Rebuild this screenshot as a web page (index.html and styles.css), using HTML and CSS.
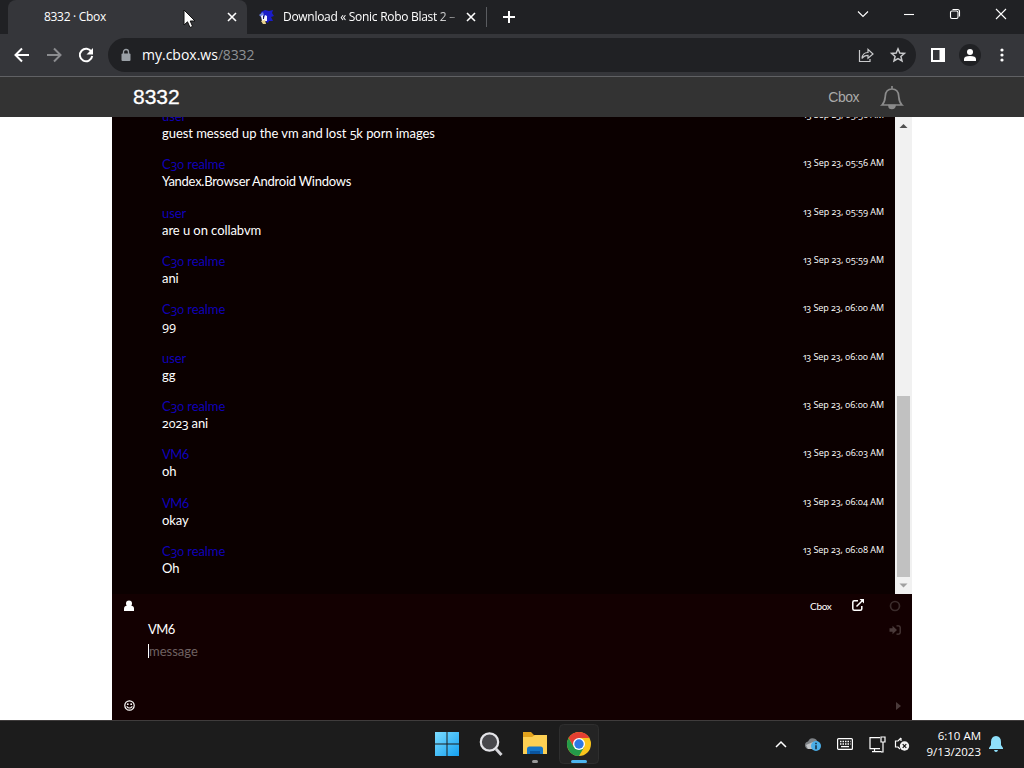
FILE: index.html
```html
<!DOCTYPE html>
<html lang="en">
<head>
<meta charset="utf-8">
<title>8332 · Cbox</title>
<link rel="stylesheet" href="styles.css">
</head>
<body>
<div class="screen">
  <div class="tabstrip">
    <div class="tab active"><span class="tab-title t1">8332 · Cbox</span>
      <svg class="x" viewBox="0 0 10 10"><path d="M1 1l8 8M9 1l-8 8"/></svg></div>
    <div class="tab second">
      <svg class="fav" viewBox="0 0 16 16"><path fill="#1a1cc8" d="M3 3l4-2 4 1 4-1-1 3 2 3-3 1 2 4-4 0-1 2-3-2-4-3z"/><path fill="#6b7fe0" d="M1 6l4-3 1 3-3 2z"/><path fill="#f4f4ff" d="M3 7l2-1 1 3 1-3 2 1 0 5-3 0-2 0z"/><path fill="#111a50" d="M5 7h1v3H5z"/><path fill="#e9d28c" d="M3 12l4-1 1 4-3 0z"/></svg>
      <span class="tab-title t2">Download « Sonic Robo Blast 2 –</span>
      <svg class="x" viewBox="0 0 10 10"><path d="M1 1l8 8M9 1l-8 8"/></svg></div>
    <i class="sep"></i>
    <svg class="plus" viewBox="0 0 12 12"><path d="M6 0v12M0 6h12"/></svg>
    <div class="winctl">
      <svg width="12" height="12" viewBox="0 0 12 12"><path d="M1 3.500l5 5 5-5"/></svg>
      <svg width="12" height="12" viewBox="0 0 12 12"><path d="M1 6.500h10"/></svg>
      <svg width="12" height="12" viewBox="0 0 12 12"><rect x="1.500" y="3" width="7.500" height="7.500" rx="1.500"/><path d="M3.500 1.500h5q2 0 2 2v5"/></svg>
      <svg width="12" height="12" viewBox="0 0 12 12"><path d="M1 1l10 10M11 1L1 11"/></svg>
    </div>
  </div>
  <div class="toolbar">
    <svg class="nav" viewBox="0 0 16 16"><path d="M15 8H2M8 1.500L1.500 8 8 14.500"/></svg>
    <svg class="nav dim" viewBox="0 0 16 16"><path d="M1 8h13M8 1.500L14.500 8 8 14.500"/></svg>
    <svg class="nav" viewBox="0 0 16 16"><path d="M13.500 5A6.200 6.200 0 1 0 14.200 9"/><path class="solid" d="M15 1v6.500H8.500z"/></svg>
    <div class="omni">
      <svg class="lock" viewBox="0 0 10 12"><rect x="0.500" y="4.500" width="9" height="7.500" rx="1" fill="#9aa0a6"/><path d="M2.500 5V3a2.500 2.500 0 0 1 5 0v2" fill="none" stroke="#9aa0a6" stroke-width="1.300"/></svg>
      <span class="url">my.cbox.ws<b>/8332</b></span>
      <svg class="oi share" viewBox="0 0 16 16"><path d="M1.500 3v11.500H12V12M4 11.500c.3-4 2.500-6 6-6V2.300L15 7l-5 4.300V8.300c-2.500 0-4.500.8-6 3.200z"/></svg>
      <svg class="oi" viewBox="0 0 16 16"><path stroke-width="1.500" d="M8 1.800l1.800 4.200 4.600.4-3.500 3 1.100 4.500L8 11.500l-4 2.400 1.100-4.500-3.500-3L6.200 6z"/></svg>
    </div>
    <svg class="side" viewBox="0 0 14 14"><path fill="#fff" fill-rule="evenodd" d="M0 0h14v14H0zM2 2v10h6.500V2z"/></svg>
    <div class="avatar"><svg viewBox="0 0 12 12"><circle cx="6" cy="3" r="3"/><path d="M0 12v-2q0-3 6-3t6 3v2z"/></svg></div>
    <svg class="dots" viewBox="0 0 4 14"><circle cx="2" cy="2" r="1.600"/><circle cx="2" cy="7" r="1.600"/><circle cx="2" cy="12" r="1.600"/></svg>
  </div>
  <div class="sitebar">
    <span class="room">8332</span><span class="brand">Cbox</span>
    <svg class="bell" viewBox="0 0 22 24"><path d="M1 20c3-3 3-5 3.300-9C4.600 6.500 7 4 11 4s6.400 2.500 6.700 7c.3 4 .3 6 3.300 9zM11 4V1"/><path d="M8 20.500a3 3 0 0 0 6 0z" fill="#8b8b8b"/></svg>
  </div>
  <div class="page">
    <div class="cbox">
      <div class="log">
        <div class="msgs">
          <div class="msg"><time>13 Sep 23, 05:56 AM</time><div class="who">user</div><p>guest messed up the vm and lost <span class="num">5</span>k porn images</p></div>
          <div class="msg"><time>13 Sep 23, 05:56 AM</time><div class="who">C<span class="num">30</span> realme</div><p class="tight">Yandex.Browser Android Windows</p></div>
          <div class="msg"><time>13 Sep 23, 05:59 AM</time><div class="who">user</div><p>are u on collabvm</p></div>
          <div class="msg"><time>13 Sep 23, 05:59 AM</time><div class="who">C<span class="num">30</span> realme</div><p>ani</p></div>
          <div class="msg"><time>13 Sep 23, 06:00 AM</time><div class="who">C<span class="num">30</span> realme</div><p><span class="num">99</span></p></div>
          <div class="msg"><time>13 Sep 23, 06:00 AM</time><div class="who">user</div><p>gg</p></div>
          <div class="msg"><time>13 Sep 23, 06:00 AM</time><div class="who">C<span class="num">30</span> realme</div><p><span class="num">2023</span> ani</p></div>
          <div class="msg"><time>13 Sep 23, 06:03 AM</time><div class="who vm">VM6</div><p>oh</p></div>
          <div class="msg"><time>13 Sep 23, 06:04 AM</time><div class="who vm">VM6</div><p>okay</p></div>
          <div class="msg"><time>13 Sep 23, 06:08 AM</time><div class="who">C<span class="num">30</span> realme</div><p>Oh</p></div>
        </div>
        <div class="scroll">
          <svg viewBox="0 0 17 17"><path fill="#505050" d="M4.500 11L8.500 7l4 4z"/></svg>
          <i class="thumb"></i>
          <svg viewBox="0 0 17 17"><path fill="#a0a0a0" d="M4.500 6.500l4 4 4-4z"/></svg>
        </div>
      </div>
      <div class="form">
        <div class="left">
          <svg width="10" height="12" viewBox="0 0 10 12"><circle cx="5" cy="3.500" r="3"/><path d="M0 11V8.500Q0 6 3 5.500h4q3 .5 3 3V11z"/></svg>
          <svg width="11" height="11" viewBox="0 0 11 11"><circle cx="5.500" cy="5.500" r="4.700" fill="none" stroke="#fff" stroke-width="1.200"/><circle cx="3.800" cy="4.200" r=".9"/><circle cx="7.200" cy="4.200" r=".9"/><path d="M2.700 6.300q2.800 3.500 5.600 0" fill="none" stroke="#fff" stroke-width="1.100"/></svg>
        </div>
        <div class="fields"><div class="nick">VM6</div><div class="field"><i class="caret"></i>message</div></div>
        <span class="by">Cbox</span>
        <svg class="ext" viewBox="0 0 12 12"><path d="M6 1.800H2.300Q.8 1.800.8 3.300v6.400q0 1.500 1.500 1.500h6q1.500 0 1.500-1.500V7M4.500 7.500L10 2" fill="none" stroke="#fff" stroke-width="1.500"/><path fill="#fff" d="M7.500 0H12v4.500z"/></svg>
        <div class="right">
          <svg width="12" height="12" viewBox="0 0 12 12"><circle cx="6" cy="6" r="4.500" fill="none" stroke="#3b2c2c" stroke-width="1.700"/></svg>
          <svg class="login" width="12" height="12" viewBox="0 0 12 12"><path fill="#4a3a3a" d="M.5 4.300h3V1.800L8 6l-4.500 4.200V7.700h-3z"/><path d="M7.500 1.800h2q1.700 0 1.700 1.700v5q0 1.700-1.700 1.700h-2" fill="none" stroke="#4a3a3a" stroke-width="1.300"/></svg>
          <svg class="go" width="5" height="8" viewBox="0 0 5 8"><path fill="#4a3a3a" d="M0 0l5 4-5 4z"/></svg>
        </div>
      </div>
    </div>
  </div>
  <div class="taskbar">
    <div class="apps">
      <svg width="40" height="40" viewBox="0 0 40 40"><defs><linearGradient id="w" x1="0" y1="0" x2="1" y2="1"><stop offset="0" stop-color="#7bdcff"/><stop offset="1" stop-color="#14a0f0"/></linearGradient></defs><path fill="url(#w)" d="M8 8h11.500v11.500H8zM20.500 8H32v11.500H20.500zM8 20.500h11.500V32H8zM20.500 20.500H32V32H20.500z"/></svg>
      <svg width="40" height="40" viewBox="0 0 40 40"><path d="M25 25l5.500 6" stroke="#d5d5d9" stroke-width="3"/><circle cx="18.500" cy="18" r="8.700" fill="#48484c" stroke="#e4e4e8" stroke-width="2.200"/></svg>
      <svg width="40" height="40" viewBox="0 0 40 40"><path fill="#e2a21c" d="M8 8h8l3 3h8v6H8z"/><path fill="#fccf53" d="M8 13h9l3-2h12v19H8z"/><path fill="#1475c8" d="M12 30v-5q0-2.500 2.500-2.500h11q2.500 0 2.500 2.500v5z"/><path fill="#0b559f" d="M15 27h10v3H15z"/><rect x="17" y="36" width="6" height="3" rx="1.500" fill="#999"/></svg>
      <svg width="40" height="40" viewBox="0 0 40 40"><rect x=".5" y=".5" width="39" height="39" rx="4" fill="#242424" stroke="#2e2e2e"/><circle cx="20" cy="20" r="12" fill="#f9c51c"/><path fill="#e53f32" d="M9.600 14A12 12 0 0 1 30.400 14H20l-5.200 9z"/><path fill="#249b49" d="M9.600 14A12 12 0 0 0 20 32l5.200-9H14.800z"/><circle cx="20" cy="20" r="6" fill="#fff"/><circle cx="20" cy="20" r="4.700" fill="#2c78e4"/><rect x="12" y="36" width="16" height="3" rx="1.500" fill="#4cb5ef"/></svg>
    </div>
    <div class="tray">
      <svg width="12" height="8" viewBox="0 0 12 8"><path d="M1 7l5-5 5 5" fill="none" stroke="#fff" stroke-width="1.500"/></svg>
      <svg width="18" height="16" viewBox="0 0 18 16"><path fill="#7e8286" d="M1 9q0-3 3-3.500Q6 1 10 2.500q3 .5 3.500 4L9 13H4q-3-1-3-4z"/><path fill="#bfc2c5" d="M2 9l7-3 4 3-4 4H4z"/><circle cx="12" cy="10" r="5" fill="#4aaee8"/><path d="M12 9.300v4M12 6.800v1.400" stroke="#123" stroke-width="1.400"/></svg>
      <svg width="16" height="12" viewBox="0 0 16 12"><rect x=".6" y=".6" width="14.800" height="10.800" rx="1" fill="none" stroke="#fff" stroke-width="1.200"/><path d="M3 3.500h10.500M3 6h10.500" stroke="#fff" stroke-width="1.300" stroke-dasharray="1.500 1"/><path d="M4 8.600h8" stroke="#fff" stroke-width="1.300"/></svg>
      <svg width="17" height="17" viewBox="0 0 17 17"><path d="M11 1.600H1v11h10M5.500 12.600v3M3 15.700h9.500" fill="none" stroke="#fff" stroke-width="1.200"/><path d="M12 1h4v5h-4zM14 6v10h-2" fill="none" stroke="#fff" stroke-width="1.200"/></svg>
      <svg width="16" height="16" viewBox="0 0 16 16"><path d="M7 2L4 5H1.500v6H4l2 2M7 2v3" fill="none" stroke="#fff" stroke-width="1.200"/><circle cx="10.500" cy="10" r="4.700" fill="#f2f2f2"/><path d="M8.700 8.200l3.600 3.600m0-3.600l-3.600 3.600" stroke="#111" stroke-width="1.200"/></svg>
    </div>
    <div class="clock"><span class="hour">6:10 AM</span><span class="date">9/13/2023</span></div>
    <svg class="notif" viewBox="0 0 14 16"><path fill="#8fe0fb" d="M7 0q5 .5 5 6v3l2 3v1H0v-1l2-3V6Q2 .5 7 0zM5 14h4q-.5 2-2 2t-2-2z"/></svg>
  </div>
  <svg class="cursor" viewBox="0 0 13 20"><path d="M1 1v15l3.500-3.200L7 18.500l2.600-1.100L7.200 12H12z" fill="#fff" stroke="#111" stroke-width="1"/></svg>
</div>
</body>
</html>
```
FILE: styles.css
```css
* { box-sizing: border-box; }
body { margin: 0; }
svg { display: block; flex: none; overflow: visible; }
.screen { position: relative; width: 1024px; height: 768px; overflow: hidden; display: flex; flex-direction: column; background: #fff; font-family: "Open Sans", "Noto Sans", sans-serif; color: #fff; white-space: nowrap; }

.tabstrip { height: 34px; background: #202124; display: flex; align-items: center; padding-left: 8px; flex: none; }
.tab { height: 34px; display: flex; align-items: center; font-size: 12px; }
.active { width: 239px; background: #35363a; border-radius: 8px 8px 0 0; padding: 0 10px 0 36px; justify-content: space-between; }
.t1 { letter-spacing: -0.3px; }
.second { width: 238px; padding: 0 9px 0 11px; }
.fav { width: 16px; height: 16px; margin-right: 9px; }
.t2 { width: 174px; margin-right: 9px; letter-spacing: -0.29px; -webkit-mask-image: linear-gradient(90deg, #000 88%, #0005); mask-image: linear-gradient(90deg, #000 88%, #0005); }
.tab-title { padding-bottom: 1px; }
.x { width: 10px; height: 10px; fill: none; stroke: #fff; stroke-width: 1.6; }
.sep { width: 1px; height: 20px; background: #5a5c60; margin-left: 1px; }
.plus { width: 12px; height: 12px; margin-left: 16px; stroke: #fff; stroke-width: 2; }
.winctl { margin-left: auto; padding: 0 17px 6px 0; display: flex; gap: 34px; fill: none; stroke: #fff; stroke-width: 1.1; }

.toolbar { height: 43px; flex: none; background: #35363a; border-bottom: 1px solid #606164; display: flex; align-items: center; padding-left: 14px; }
.nav { width: 16px; height: 16px; margin-right: 16px; fill: none; stroke: #fff; stroke-width: 2; }
.nav .solid { fill: #fff; stroke: none; }
.dim { stroke: #8b8c8f; }
.omni { width: 808px; height: 34px; margin-left: -2px; background: #202124; border-radius: 17px; display: flex; align-items: center; padding: 0 10px 0 13px; }
.lock { width: 10px; height: 12px; margin-right: 11px; }
.url { font-size: 14px; flex: 1; padding-bottom: 1px; }
.url b { font-weight: 400; color: #8e9195; letter-spacing: -0.15px; }
.oi { width: 16px; height: 16px; fill: none; stroke: #c9cacc; stroke-width: 1.2; }
.share { margin-right: 16px; }
.side { width: 14px; height: 14px; margin-left: 15px; }
.avatar { width: 22px; height: 22px; border-radius: 50%; background: #202124; margin-left: 14px; display: flex; align-items: center; justify-content: center; }
.avatar svg { width: 12px; height: 12px; fill: #fff; }
.dots { width: 4px; height: 14px; margin-left: 19px; fill: #fff; }

.sitebar { height: 40px; flex: none; background: #333; display: flex; align-items: center; padding: 0 121px 0 133px; font-family: "Liberation Sans", Arial, sans-serif; }
.room { font-size: 21px; flex: 1; -webkit-text-stroke: 0.3px #fff; }
.brand { font-size: 14px; letter-spacing: -0.5px; color: #aaa; margin-right: 22px; }
.bell { width: 22px; height: 24px; fill: none; stroke: #8b8b8b; stroke-width: 1.7; }

.page { height: 603px; flex: none; display: flex; justify-content: center; }
.cbox { width: 800px; background: #130001; font-family: Lato, "Noto Sans", sans-serif; }
.log { height: 477px; display: flex; background: #0b0000; overflow: hidden; }
.msgs { width: 783px; height: 477px; overflow: hidden; padding: 0 11px 2.5px 50px; display: flex; flex-direction: column; justify-content: flex-end; }
.msg { height: 48.35px; flex: none; font-size: 13px; line-height: 17px; letter-spacing: -0.06px; }
.msg time { float: right; font-family: "Open Sans", Lato, sans-serif; font-size: 9px; line-height: 14px; font-variant-numeric: oldstyle-nums proportional-nums; }
.num { font-family: "Open Sans", Lato, sans-serif; font-size: 12.5px; line-height: 1; letter-spacing: -0.3px; font-variant-numeric: oldstyle-nums proportional-nums; }
.who { color: #1000b8; }
.vm { letter-spacing: -0.6px; }
.msg p { margin: 0; }
.msg .tight { letter-spacing: -0.26px; }
.scroll { width: 17px; background: #f1f1f1; display: flex; flex-direction: column; }
.scroll svg { width: 17px; height: 17px; }
.thumb { margin: auto 2px 0; height: 181px; background: #c1c1c1; }

.form { height: 126px; display: flex; align-items: flex-start; padding: 6px 11px 0 12px; }
.left { width: 24px; height: 111px; display: flex; flex-direction: column; justify-content: space-between; fill: #fff; }
.fields { width: 662px; padding-top: 19px; font-size: 13px; line-height: 20px; }
.nick { letter-spacing: -0.6px; }
.field { display: flex; align-items: center; color: #6f6262; margin-top: 2px; }
.caret { width: 1px; height: 14px; background: #fff; }
.by { width: 42px; font-size: 10px; line-height: 13px; letter-spacing: -0.3px; }
.ext { width: 12px; height: 12px; margin-top: -1px; }
.right { margin-left: auto; display: flex; flex-direction: column; }
.login { margin-top: 12px; }
.go { margin: 66px 0 0 7px; }

.taskbar { height: 48px; flex: none; background: #1c1c1c; border-top: 1px solid #3f3c3c; display: flex; padding-left: 427px; }
.apps { display: flex; gap: 4px; padding-top: 3px; }
.tray { width: 135px; margin-left: 176px; padding-bottom: 1px; display: flex; align-items: center; }
.tray svg:nth-child(2) { margin-left: 17px; }
.tray svg:nth-child(3) { margin-left: 15px; }
.tray svg:nth-child(4) { margin-left: 16px; }
.tray svg:nth-child(5) { margin-left: 8px; }
.clock { width: 71px; display: flex; flex-direction: column; align-items: flex-end; padding-top: 7px; font-size: 11.5px; line-height: 16px; }
.notif { width: 14px; height: 16px; margin: 15px 0 0 8px; }
.cursor { position: absolute; left: 183px; top: 9px; width: 13px; height: 20px; }
```
